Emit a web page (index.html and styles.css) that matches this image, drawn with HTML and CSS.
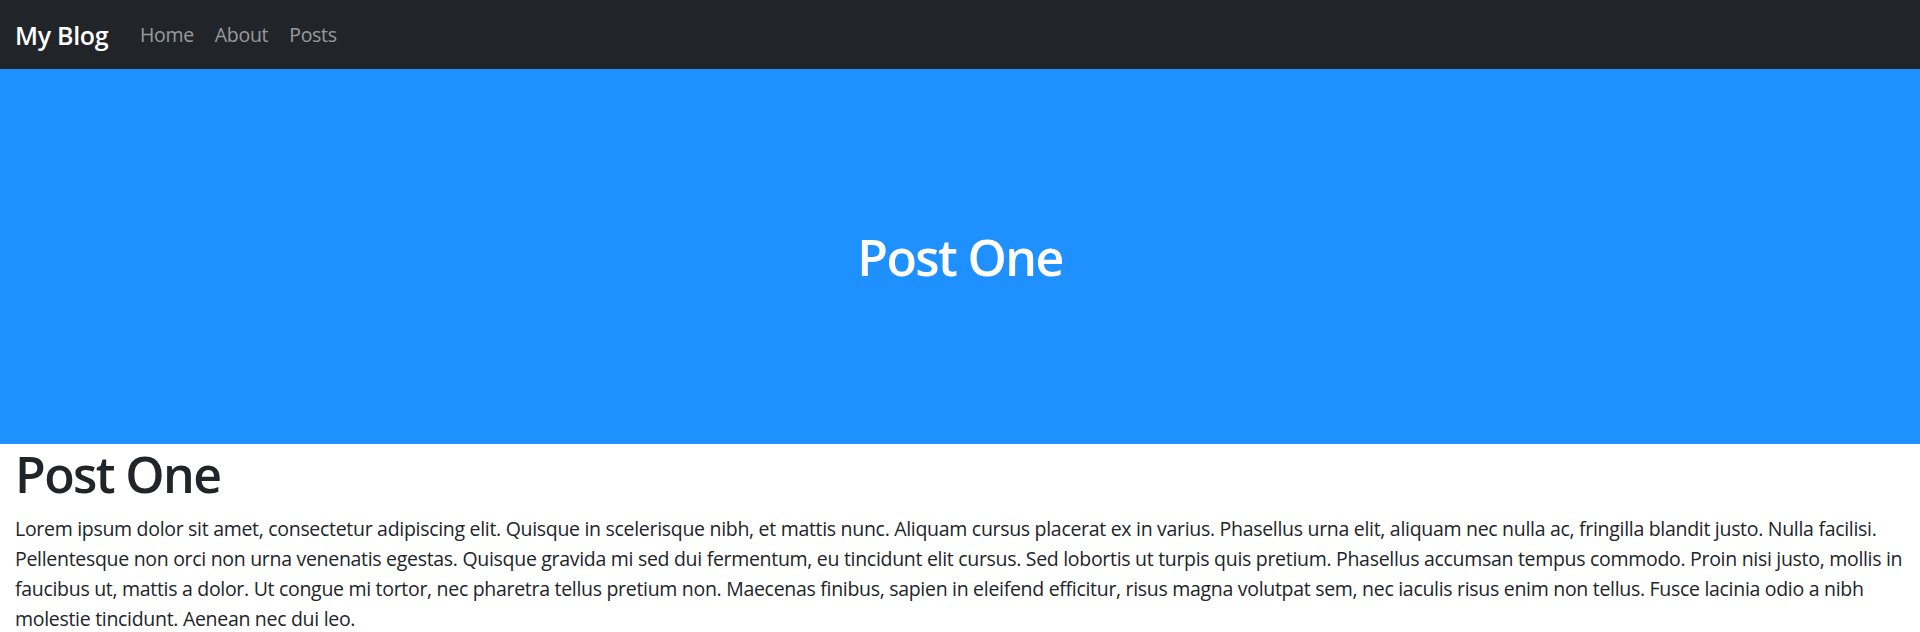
FILE: index.html
```html
<!DOCTYPE html>
<html lang="en">
<head>
<meta charset="utf-8">
<title>My Blog</title>
<link rel="stylesheet" href="styles.css">
</head>
<body>
<nav class="navbar">
  <a class="brand" href="#">My Blog</a>
  <ul class="nav">
    <li><a class="nav-link" href="#">Home</a></li>
    <li><a class="nav-link" href="#">About</a></li>
    <li><a class="nav-link" href="#">Posts</a></li>
  </ul>
</nav>
<header class="hero">
  <h1 class="hero-title">Post One</h1>
</header>
<main class="content">
  <h1 class="post-title">Post One</h1>
  <p class="post-body">Lorem ipsum dolor sit amet, consectetur adipiscing elit. Quisque in scelerisque nibh, et mattis nunc. Aliquam cursus placerat ex in varius. Phasellus urna elit, aliquam nec nulla ac, fringilla blandit justo. Nulla facilisi. Pellentesque non orci non urna venenatis egestas. Quisque gravida mi sed dui fermentum, eu tincidunt elit cursus. Sed lobortis ut turpis quis pretium. Phasellus accumsan tempus commodo. Proin nisi justo, mollis in faucibus ut, mattis a dolor. Ut congue mi tortor, nec pharetra tellus pretium non. Maecenas finibus, sapien in eleifend efficitur, risus magna volutpat sem, nec iaculis risus enim non tellus. Fusce lacinia odio a nibh molestie tincidunt. Aenean nec dui leo.</p>
</main>
</body>
</html>
```

FILE: styles.css
```css
* { box-sizing: border-box; }
html, body {
  margin: 0;
  padding: 0;
}
body {
  font-family: "Open Sans", "Noto Sans", sans-serif;
  font-size: 19.5px;
  line-height: 30px;
  letter-spacing: -0.3px;
  color: #212529;
  background: #fff;
}
.navbar {
  height: 69px;
  background: #212529;
  display: flex;
  align-items: center;
  padding: 0 15px;
}
.brand {
  font-size: 25px;
  line-height: 30px;
  font-weight: 600;
  letter-spacing: -0.3px;
  color: #fff;
  text-decoration: none;
  margin-right: 21px;
}
.nav {
  list-style: none;
  margin: 0;
  padding: 0;
  display: flex;
}
.nav-link {
  display: block;
  padding: 0 10.5px;
  color: rgba(255, 255, 255, 0.55);
  text-decoration: none;
}
.hero {
  height: 375px;
  background: #1e90ff;
  display: flex;
  align-items: center;
  justify-content: center;
}
.hero-title {
  margin: 0;
  color: #fff;
  font-size: 50px;
  line-height: 60px;
  font-weight: 600;
  letter-spacing: -1.6px;
}
.content {
  padding: 0 15px;
}
.post-title {
  margin: 0 0 10px;
  font-size: 50px;
  line-height: 60px;
  font-weight: 600;
  letter-spacing: -1.6px;
}
.post-body {
  margin: 0 0 20px;
}
```
